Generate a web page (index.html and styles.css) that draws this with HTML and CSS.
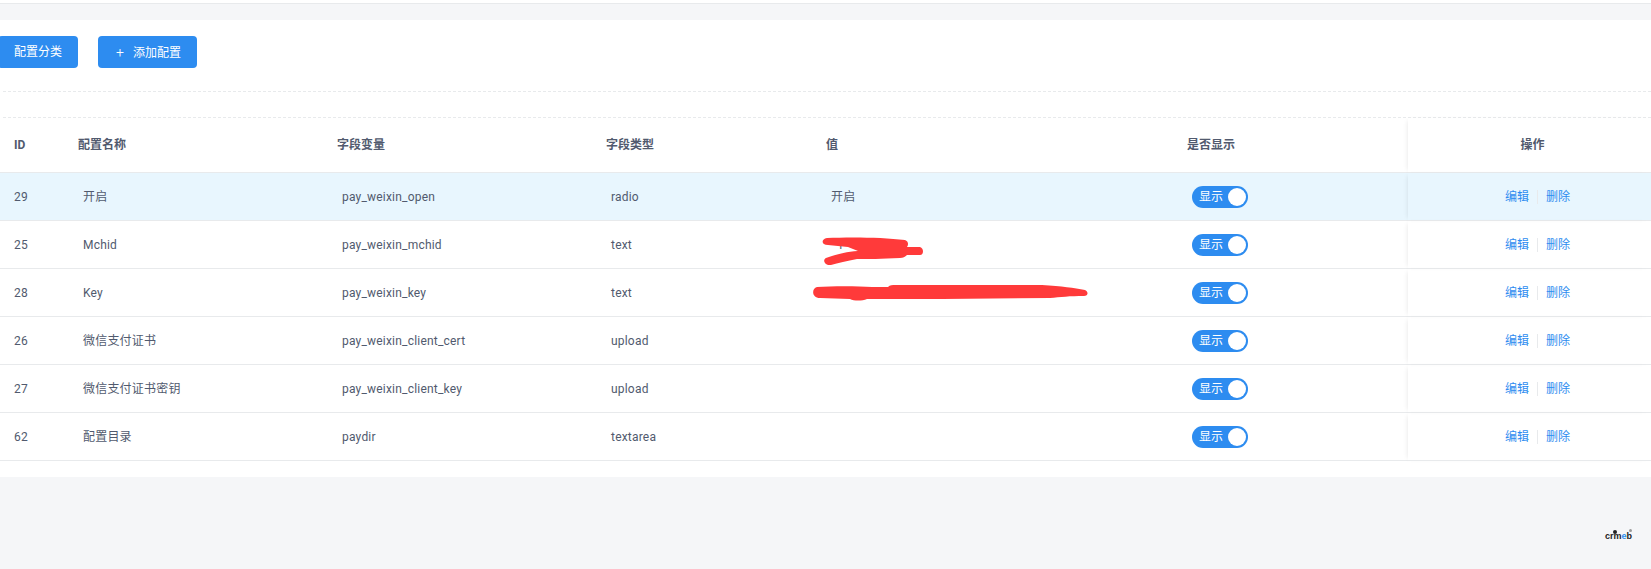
FILE: index.html
```html
<!DOCTYPE html>
<html lang="zh-CN">
<head>
<meta charset="utf-8">
<title>配置列表</title>
<link rel="stylesheet" href="styles.css">
</head>
<body>
<div class="topbar"></div>
<main class="card">
  <div class="toolbar">
    <button class="btn btn-first">配置分类</button>
    <button class="btn"><span class="plus">+</span>添加配置</button>
  </div>
  <div class="dash dash-a"></div>
  <div class="dash dash-b"></div>
  <table class="grid">
    <colgroup>
      <col class="c-id"><col class="c-name"><col class="c-var"><col class="c-type"><col class="c-val"><col class="c-show"><col class="c-gap"><col class="c-act">
    </colgroup>
    <thead>
      <tr>
        <th>ID</th><th>配置名称</th><th>字段变量</th><th>字段类型</th><th>值</th><th>是否显示</th><th></th><th class="fixed center">操作</th>
      </tr>
    </thead>
    <tbody>
      <tr class="hl">
        <td>29</td><td class="in">开启</td><td class="in">pay_weixin_open</td><td class="in">radio</td><td class="in">开启</td>
        <td class="in"><span class="sw">显示<i class="knob"></i></span></td><td></td>
        <td class="fixed center"><a class="lnk">编辑</a><i class="sep"></i><a class="lnk">删除</a></td>
      </tr>
      <tr>
        <td>25</td><td class="in">Mchid</td><td class="in">pay_weixin_mchid</td><td class="in">text</td>
        <td class="in scrib-cell"><span class="masked">1</span>
          <svg class="scrib scrib-a" viewBox="0 0 102 30" width="102" height="30" aria-hidden="true">
            <path class="red" d="M5 2 C25 1 60 1 83 4 C86 5 87 8 85 11 L98 11 C102 12 102 19 98 19 L85 19 C83 21 81 22 78 22 C60 23 45 23 35 23 C25 25 16 27 9 29 C3 30 0 24 4 22 C12 19 22 16 36 15 L26 11 L6 9 C-1 9 -1 3 5 2 Z"/>
          </svg>
        </td>
        <td class="in"><span class="sw">显示<i class="knob"></i></span></td><td></td>
        <td class="fixed center"><a class="lnk">编辑</a><i class="sep"></i><a class="lnk">删除</a></td>
      </tr>
      <tr>
        <td>28</td><td class="in">Key</td><td class="in">pay_weixin_key</td><td class="in">text</td>
        <td class="in scrib-cell">
          <svg class="scrib scrib-b" viewBox="0 0 276 18" width="276" height="18" aria-hidden="true">
            <path class="red" d="M5 3 C20 2 45 2 60 3 L76 3 C78 1 80 1 84 1 L230 1 C250 2 262 4 273 6 C277 8 276 12 272 12 C258 12 248 13 238 14 L130 15 L55 15 C50 17 42 17 38 15 L8 14 C0 14 -1 5 5 3 Z"/>
          </svg>
        </td>
        <td class="in"><span class="sw">显示<i class="knob"></i></span></td><td></td>
        <td class="fixed center"><a class="lnk">编辑</a><i class="sep"></i><a class="lnk">删除</a></td>
      </tr>
      <tr>
        <td>26</td><td class="in">微信支付证书</td><td class="in">pay_weixin_client_cert</td><td class="in">upload</td><td class="in"></td>
        <td class="in"><span class="sw">显示<i class="knob"></i></span></td><td></td>
        <td class="fixed center"><a class="lnk">编辑</a><i class="sep"></i><a class="lnk">删除</a></td>
      </tr>
      <tr>
        <td>27</td><td class="in">微信支付证书密钥</td><td class="in">pay_weixin_client_key</td><td class="in">upload</td><td class="in"></td>
        <td class="in"><span class="sw">显示<i class="knob"></i></span></td><td></td>
        <td class="fixed center"><a class="lnk">编辑</a><i class="sep"></i><a class="lnk">删除</a></td>
      </tr>
      <tr>
        <td>62</td><td class="in">配置目录</td><td class="in">paydir</td><td class="in">textarea</td><td class="in"></td>
        <td class="in"><span class="sw">显示<i class="knob"></i></span></td><td></td>
        <td class="fixed center"><a class="lnk">编辑</a><i class="sep"></i><a class="lnk">删除</a></td>
      </tr>
    </tbody>
  </table>
</main>
<div class="logo"><i class="logo-dot"></i><i class="logo-reg"></i>crm<b>e</b>b</div>
</body>
</html>
```
FILE: styles.css
```css
* { box-sizing: border-box; }
html, body { margin: 0; height: 569px; overflow: hidden; }
body {
  position: relative;
  background: #f5f6f8;
  color: #515a6e;
  font: 12px/1.5 Roboto, "Noto Sans CJK SC", sans-serif;
  letter-spacing: .2px;
}
.topbar { height: 4px; background: #fff; border-bottom: 1px solid #e8eaec; }
.card { margin-top: 16px; height: 457px; background: #fff; padding-top: 16px; }
.toolbar { display: flex; gap: 20px; height: 32px; margin-left: -2px; }
.btn {
  height: 32px;
  padding: 0 16px;
  border: 0;
  border-radius: 4px;
  background: #2d8cf0;
  color: #fff;
  font: inherit;
  letter-spacing: 0;
}
.btn-first { padding-left: 16px; }
.plus { display: inline-block; width: 17px; margin-left: 2px; text-align: left; font-size: 14px; font-weight: 300; }
.dash { margin-left: 3px; border-top: 1px dashed #e8eaec; }
.dash-a { margin-top: 23px; }
.dash-b { margin-top: 25px; }
.grid { width: 1651px; table-layout: fixed; border-collapse: separate; border-spacing: 0; }
.c-id { width: 64px; }
.c-name { width: 259px; }
.c-var { width: 269px; }
.c-type { width: 220px; }
.c-val { width: 361px; }
.c-show { width: 120px; }
.c-gap { width: 115px; }
.c-act { width: 243px; }
th, td { padding: 0 0 0 14px; border-bottom: 1px solid #e8eaec; text-align: left; }
th { height: 55px; font-weight: 700; letter-spacing: 0; }
td { height: 48px; }
td.in { padding-left: 19px; }
tr.hl td { background: #e8f6fe; }
.fixed { box-shadow: -3px 0 5px -3px rgba(0, 0, 0, .1); }
th.center { padding-left: 6px; text-align: center; }
td.center { padding-left: 16px; text-align: center; }
.sw {
  display: inline-flex;
  align-items: center;
  justify-content: space-between;
  width: 56px;
  height: 22px;
  padding: 0 2px 0 7px;
  border-radius: 11px;
  background: #2d8cf0;
  color: #fff;
  letter-spacing: 0;
  vertical-align: middle;
}
.knob { width: 18px; height: 18px; border-radius: 50%; background: #fff; }
.lnk { color: #2d8cf0; letter-spacing: 0; }
.sep { display: inline-block; width: 1px; height: 14px; margin: 0 8px; background: #e8eaec; vertical-align: middle; }
.scrib-cell { position: relative; }
.masked { margin-left: 6px; }
.scrib { position: absolute; overflow: visible; }
.scrib-a { left: 10px; top: 15px; }
.scrib-b { left: 0; top: 15px; }
.red { fill: #ff3a3a; }
.logo {
  position: absolute;
  left: 1605px;
  top: 529px;
  font: 700 9px/14px "Liberation Sans", sans-serif;
  letter-spacing: 0;
  color: #222;
}
.logo b { color: #2d8cf0; }
.logo-dot { position: absolute; left: 8px; top: 1px; width: 4px; height: 4px; border-radius: 50%; background: #222; }
.logo-reg { position: absolute; left: 24px; top: 0; width: 3px; height: 3px; border-radius: 50%; background: #999; }
```
